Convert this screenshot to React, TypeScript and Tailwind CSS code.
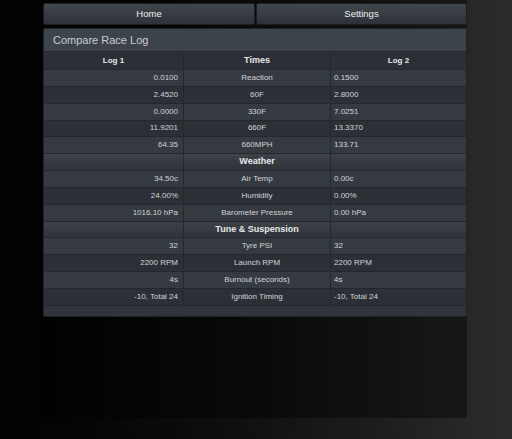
const times = [
  ["0.0100", "Reaction", "0.1500"],
  ["2.4520", "60F", "2.8000"],
  ["0.0000", "330F", "7.0251"],
  ["11.9201", "660F", "13.3370"],
  ["64.35", "660MPH", "133.71"],
];
const weather = [
  ["34.50c", "Air Temp", "0.00c"],
  ["24.00%", "Humidity", "0.00%"],
  ["1016.10 hPa", "Barometer Pressure", "0.00 hPa"],
];
const tune = [
  ["32", "Tyre PSI", "32"],
  ["2200 RPM", "Launch RPM", "2200 RPM"],
  ["4s", "Burnout (seconds)", "4s"],
  ["-10, Total 24", "Ignition Timing", "-10, Total 24"],
];

function Row({ r, i }: { r: string[]; i: number }) {
  const bg = i % 2 === 0 ? "bg-[#353a41]" : "bg-[#2c3036]";
  return (
    <div className={`grid grid-cols-[140px_147px_1fr] h-[16.85px] border-b border-[#24272c] text-[8px] text-[#d2d4d7] ${bg}`}>
      <div className="flex items-center justify-end pr-[5px] border-r border-[#24272c]">{r[0]}</div>
      <div className="flex items-center justify-center border-r border-[#24272c]">{r[1]}</div>
      <div className="flex items-center pl-[3px]">{r[2]}</div>
    </div>
  );
}

function Group({ title }: { title: string }) {
  return (
    <div className="grid grid-cols-[140px_147px_1fr] h-[16.85px] border-b border-[#24272c] bg-gradient-to-b from-[#3d4148] to-[#30343a] text-[9px] font-bold text-[#e8e9ea]">
      <div className="border-r border-[#24272c]" />
      <div className="flex items-center justify-center border-r border-[#24272c]">{title}</div>
      <div />
    </div>
  );
}

export default function App() {
  return (
    <div
      className="h-[439px] w-[512px] overflow-hidden bg-gradient-to-r from-[#020202] via-[#111] to-[#2c2c2c]"
      style={{ fontFamily: '"Liberation Sans", Arial, sans-serif' }}
    >
      <div className="ml-[37px] h-[418px] w-[430px] rounded-b-[3px] bg-black/40 pl-[6px] pt-[3px]">
        <div className="flex gap-px">
          <button className="h-[22px] w-[212px] rounded-[2px] border border-[#1c1e22] bg-gradient-to-b from-[#41464d] to-[#2e3238] text-[9.5px] text-[#eef0f2]">
            Home
          </button>
          <button className="h-[22px] flex-1 rounded-[2px] border border-[#1c1e22] bg-gradient-to-b from-[#41464d] to-[#2e3238] text-[9.5px] text-[#eef0f2]">
            Settings
          </button>
        </div>
        <div className="mt-[3px] rounded-[2px] border border-[#1f2226] bg-[#30353b] pb-[10px]">
          <div className="flex h-[22px] items-center bg-[#3d434b] pl-[9px] pt-px text-[11px] text-[#c9ccd0]">
            Compare Race Log
          </div>
          <div className="grid grid-cols-[140px_147px_1fr] h-[19px] border-y border-[#24272c] bg-[#2c3036] text-[8px] font-bold text-[#e8e9ea]">
            <div className="flex items-center justify-center border-r border-[#24272c]">Log 1</div>
            <div className="flex items-center justify-center border-r border-[#24272c] text-[9px]">Times</div>
            <div className="flex items-center justify-center">Log 2</div>
          </div>
          {times.map((r, i) => <Row key={r[1]} r={r} i={i} />)}
          <Group title="Weather" />
          {weather.map((r, i) => <Row key={r[1]} r={r} i={i} />)}
          <Group title="Tune & Suspension" />
          {tune.map((r, i) => <Row key={r[1]} r={r} i={i} />)}
        </div>
      </div>
    </div>
  );
}
